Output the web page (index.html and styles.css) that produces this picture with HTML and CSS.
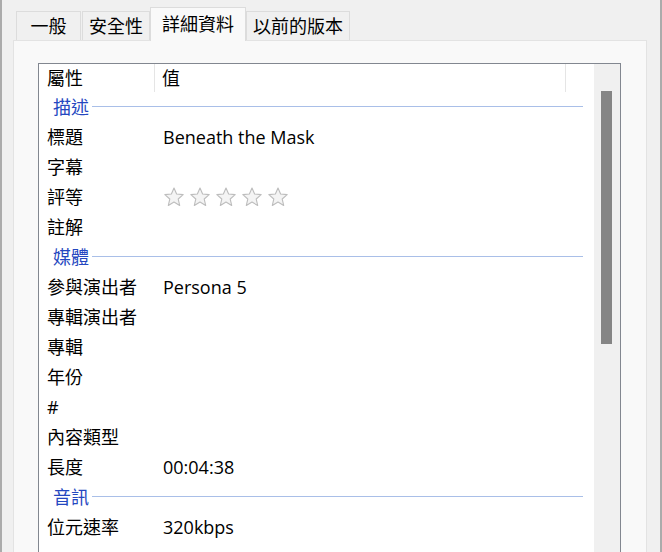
FILE: index.html
```html
<!DOCTYPE html>
<html lang="zh-Hant">
<head>
  <meta charset="UTF-8" />
  <title>內容</title>
  <link rel="stylesheet" href="styles.css">
</head>
<body>
  <div class="window">
    <div class="tabs">
      <div class="tab first">一般</div>
      <div class="tab">安全性</div>
      <div class="tab active">詳細資料</div>
      <div class="tab">以前的版本</div>
    </div>

    <div class="panel">
      <div class="listbox">
        <div class="list">
          <div class="header">
            <div class="col-name">屬性</div>
            <div class="col-value">值</div>
          </div>

          <div class="section"><span>描述</span></div>
          <div class="row"><div class="name">標題</div><div class="value">Beneath the Mask</div></div>
          <div class="row"><div class="name">字幕</div><div class="value"></div></div>
          <div class="row">
            <div class="name">評等</div>
            <div class="value stars">
              <svg viewBox="0 0 24 24"><path d="M12 2.2l2.85 6.6 7.15.65-5.4 4.75 1.6 7.05L12 17.55l-6.2 3.7 1.6-7.05L2 9.45l7.15-.65z"/></svg>
              <svg viewBox="0 0 24 24"><path d="M12 2.2l2.85 6.6 7.15.65-5.4 4.75 1.6 7.05L12 17.55l-6.2 3.7 1.6-7.05L2 9.45l7.15-.65z"/></svg>
              <svg viewBox="0 0 24 24"><path d="M12 2.2l2.85 6.6 7.15.65-5.4 4.75 1.6 7.05L12 17.55l-6.2 3.7 1.6-7.05L2 9.45l7.15-.65z"/></svg>
              <svg viewBox="0 0 24 24"><path d="M12 2.2l2.85 6.6 7.15.65-5.4 4.75 1.6 7.05L12 17.55l-6.2 3.7 1.6-7.05L2 9.45l7.15-.65z"/></svg>
              <svg viewBox="0 0 24 24"><path d="M12 2.2l2.85 6.6 7.15.65-5.4 4.75 1.6 7.05L12 17.55l-6.2 3.7 1.6-7.05L2 9.45l7.15-.65z"/></svg>
            </div>
          </div>
          <div class="row"><div class="name">註解</div><div class="value"></div></div>

          <div class="section"><span>媒體</span></div>
          <div class="row"><div class="name">參與演出者</div><div class="value">Persona 5</div></div>
          <div class="row"><div class="name">專輯演出者</div><div class="value"></div></div>
          <div class="row"><div class="name">專輯</div><div class="value"></div></div>
          <div class="row"><div class="name">年份</div><div class="value"></div></div>
          <div class="row"><div class="name">#</div><div class="value"></div></div>
          <div class="row"><div class="name">內容類型</div><div class="value"></div></div>
          <div class="row"><div class="name">長度</div><div class="value">00:04:38</div></div>

          <div class="section"><span>音訊</span></div>
          <div class="row"><div class="name">位元速率</div><div class="value">320kbps</div></div>
        </div>
        <div class="scrollbar"><div class="thumb"></div></div>
      </div>
    </div>
  </div>
</body>
</html>
```

FILE: styles.css
```css
* {
  margin: 0;
  padding: 0;
  box-sizing: border-box;
}

body {
  width: 662px;
  height: 552px;
  overflow: hidden;
  background: #f0f0f0;
  font-family: 'Open Sans', 'Noto Sans CJK TC', sans-serif;
  font-size: 18px;
  color: #000;
}

.window {
  height: 552px;
  display: flex;
  flex-direction: column;
  background: #f0f0f0;
  border-left: 2px solid #ababab;
  border-right: 2px solid #ababab;
}

/* tabs */
.tabs {
  display: flex;
  align-items: flex-end;
  padding-top: 7px;
  margin-left: 14px;
  position: relative;
  z-index: 1;
}

.tab {
  height: 29px;
  line-height: 29px;
  padding: 0 6px;
  margin-right: 1px;
  text-align: center;
  background: #f0f0f0;
  border: 1px solid #dcdcdc;
  border-bottom: none;
}

.tab.first {
  min-width: 65px;
}

.tab.active {
  height: 34px;
  line-height: 32px;
  padding: 0 11px;
  margin: 0 0 -1px -1px;
  background: #f9f9f9;
}

/* content panel */
.panel {
  flex: 1;
  min-height: 0;
  display: flex;
  flex-direction: column;
  margin: 0 13px 0 11px;
  padding: 22px 25px 0 24px;
  background: #f9f9f9;
  border: 1px solid #e3e3e3;
  border-bottom: none;
}

.listbox {
  flex: 1;
  min-height: 0;
  display: flex;
  overflow: hidden;
  background: #fff;
  border: 1px solid #828790;
  border-bottom: none;
}

.list {
  flex: 1;
  overflow: hidden;
}

.header {
  display: flex;
  height: 28px;
  line-height: 28px;
}

.col-name {
  width: 116px;
  padding-left: 8px;
  border-right: 1px solid #e5e5e5;
}

.col-value {
  width: 411px;
  padding-left: 7px;
  border-right: 1px solid #e5e5e5;
}

.section {
  display: flex;
  align-items: center;
  height: 30px;
  padding: 0 11px 2px 14px;
  color: #2447c0;
}

.section::after {
  content: "";
  flex: 1;
  height: 1px;
  margin-left: 3px;
  background: #a9bfe8;
}

.row {
  display: flex;
  height: 30px;
  line-height: 30px;
}

.row .name {
  width: 116px;
  padding-left: 8px;
}

.row .value {
  padding-left: 8px;
}

.stars {
  display: flex;
  align-items: center;
  gap: 4px;
  padding-left: 7px;
}

.stars svg {
  width: 22px;
  height: 22px;
  fill: #f4f4f4;
  stroke: #bdbdbd;
  stroke-width: 1.2;
  stroke-linejoin: round;
}

/* scrollbar */
.scrollbar {
  width: 26px;
  background: #f0f0f0;
  padding: 27px 0 0 7px;
}

.thumb {
  width: 11px;
  height: 253px;
  background: #858585;
}
```
